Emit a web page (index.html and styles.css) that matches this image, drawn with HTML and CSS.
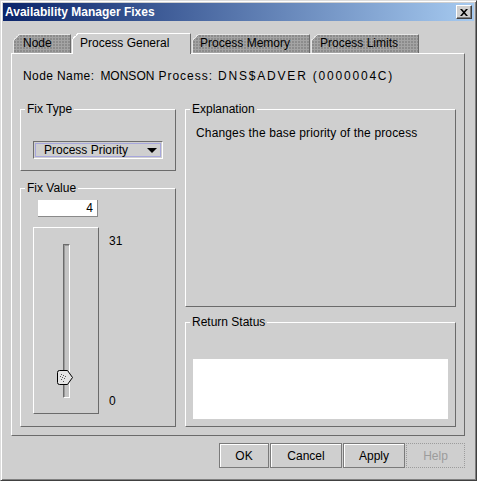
FILE: index.html
```html
<!DOCTYPE html>
<html lang="en">
<head>
  <meta charset="UTF-8">
  <title>Availability Manager Fixes</title>
  <link rel="stylesheet" href="styles.css">
</head>
<body>
  <div class="window">
    <div class="titlebar">
      <span class="title">Availability Manager Fixes</span>
      <button class="close">
        <svg width="8" height="7" viewBox="0 0 8 7"><path d="M0 0h2l2 2.2L6 0h2L5 3.5 8 7H6L4 4.8 2 7H0l3-3.5z" fill="#000"/></svg>
      </button>
    </div>

    <div class="content">
      <div class="tabs">
        <div class="tab tab-node">Node</div>
        <div class="tab tab-general active">Process General</div>
        <div class="tab tab-memory">Process Memory</div>
        <div class="tab tab-limits">Process Limits</div>
      </div>

      <div class="panel">
        <div class="node-info">
          <span class="info-label node-label">Node Name:</span>
          <span class="info-value">MONSON</span>
          <span class="info-label proc-label">Process:</span>
          <span class="info-value proc-value">DNS$ADVER (0000004C)</span>
        </div>

        <div class="groups">
          <div class="col">
            <fieldset class="group fix-type">
              <legend>Fix Type</legend>
              <div class="combo">
                <div class="combo-inner">
                  <span>Process Priority</span>
                  <svg width="10" height="5" viewBox="0 0 10 5"><path d="M0 0h10L5 5z" fill="#000"/></svg>
                </div>
              </div>
            </fieldset>

            <fieldset class="group fix-value">
              <legend>Fix Value</legend>
              <div class="value-field">4</div>
              <div class="slider-row">
                <div class="slider">
                  <div class="track"></div>
                  <svg class="thumb" width="17" height="16" viewBox="0 0 17 16">
                    <path d="M2.5 0.5H10.5L15.5 7.5L10.5 14.5H2.5Q0.5 14.5 0.5 12.5V2.5Q0.5 0.5 2.5 0.5Z" fill="#e4e4e4" stroke="#000"/>
                    <g fill="#555">
                      <rect x="4" y="4" width="1" height="1"/><rect x="6" y="5" width="1" height="1"/>
                      <rect x="5" y="7" width="1" height="1"/><rect x="7" y="8" width="1" height="1"/>
                      <rect x="4" y="9" width="1" height="1"/><rect x="6" y="11" width="1" height="1"/>
                      <rect x="8" y="6" width="1" height="1"/><rect x="3" y="6" width="1" height="1"/>
                    </g>
                  </svg>
                </div>
                <div class="scale">
                  <span>31</span>
                  <span>0</span>
                </div>
              </div>
            </fieldset>
          </div>

          <div class="col">
            <fieldset class="group explanation">
              <legend>Explanation</legend>
              <div class="explain-text">Changes the base priority of the process</div>
            </fieldset>

            <fieldset class="group return-status">
              <legend>Return Status</legend>
              <div class="status-box"></div>
            </fieldset>
          </div>
        </div>
      </div>

      <div class="buttons">
        <button class="btn btn-ok">OK</button>
        <button class="btn btn-cancel">Cancel</button>
        <button class="btn btn-apply">Apply</button>
        <button class="btn btn-help" disabled>Help</button>
      </div>
    </div>
  </div>
</body>
</html>
```

FILE: styles.css
```css
body {
  margin: 0;
  font-family: "Liberation Sans", Arial, sans-serif;
  font-size: 12px;
  color: #000;
  background-color: #cfcfcf;
}

.window {
  width: 477px;
  height: 481px;
  box-sizing: border-box;
  border: 1px solid;
  border-color: #dcdcdc #404040 #404040 #dcdcdc;
  box-shadow: inset 1px 1px #fff, inset -1px -1px #808080;
  padding: 2px;
  background-color: #cfcfcf;
  display: flex;
  flex-direction: column;
}

/* title bar */
.titlebar {
  height: 18px;
  flex: none;
  display: flex;
  align-items: center;
  justify-content: space-between;
  padding: 0 2px;
  background: linear-gradient(to right, #0a246a, #a6caf0);
}

.title {
  color: #fff;
  font-weight: bold;
  line-height: 14px;
}

.close {
  width: 16px;
  height: 14px;
  box-sizing: border-box;
  padding: 0;
  border: 1px solid;
  border-color: #fff #404040 #404040 #fff;
  box-shadow: inset -1px -1px #808080;
  background-color: #cfcfcf;
  display: flex;
  align-items: center;
  justify-content: center;
}

.content {
  padding: 12px 9px 9px 8px;
  display: flex;
  flex-direction: column;
}

/* tabs */
.tabs {
  display: flex;
  align-items: flex-end;
  gap: 1px;
  height: 20px;
  margin-left: 2px;
  position: relative;
  z-index: 1;
}

.tab {
  position: relative;
  box-sizing: border-box;
  height: 19px;
  padding: 1px 0 0 8px;
  line-height: 14px;
  white-space: nowrap;
  border: 1px solid;
  border-bottom: none;
  border-color: #e6e6e6 #6b6b6b transparent #e6e6e6;
  background-color: #a4a4a4;
  background-image: radial-gradient(circle at 1px 1px, #8a8a8a 0.7px, transparent 0.8px);
  background-size: 3px 3px;
}

.tab::before {
  content: "";
  position: absolute;
  top: -1px;
  left: -1px;
  width: 6px;
  height: 6px;
  background: linear-gradient(135deg, #cfcfcf 0 50%, #e6e6e6 50% calc(50% + 1px), transparent calc(50% + 1px));
}

.tab.active {
  height: 21px;
  margin-bottom: -1px;
  padding-top: 2px;
  padding-left: 7px;
  background: #cfcfcf;
  border-color: #fff #6b6b6b transparent #fff;
}

.tab.active::before {
  background: linear-gradient(135deg, #cfcfcf 0 50%, #fff 50% calc(50% + 1px), transparent calc(50% + 1px));
}

.tab-node { width: 58px; padding-left: 9px; }
.tab-general { width: 119px; }
.tab-memory { width: 118px; padding-left: 7px; }
.tab-limits { width: 108px; }

/* panel */
.panel {
  border: 1px solid;
  border-color: #fff #6b6b6b #6b6b6b #fff;
  padding: 0 8px 8px;
}

.node-info {
  margin-top: 15px;
  padding-left: 3px;
  line-height: 14px;
  display: flex;
}

.node-label {
  letter-spacing: 0.4px;
  margin-right: 6px;
}

.proc-label {
  letter-spacing: 1px;
  margin: 0 5px 0 4px;
}

.proc-value {
  letter-spacing: 1.8px;
}

.groups {
  margin-top: 19px;
  display: grid;
  grid-template-columns: 156px 271px;
  column-gap: 9px;
}

.col {
  display: flex;
  flex-direction: column;
}

.group {
  margin: 0;
  padding: 0;
  min-width: 0;
  border: 1px solid;
  border-color: #fff #6b6b6b #6b6b6b #fff;
}

.group legend {
  margin-left: 4px;
  padding: 0 2px;
  line-height: 14px;
}

/* fix type */
.combo {
  margin: 25px 0 11px 12px;
  width: 130px;
  height: 18px;
  box-sizing: border-box;
  border: 1px solid;
  border-color: #6e6e6e #fff #fff #6e6e6e;
  padding: 1px;
}

.combo-inner {
  height: 100%;
  box-sizing: border-box;
  border: 1px solid #a6a6dc;
  display: flex;
  align-items: center;
  justify-content: space-between;
  padding: 0 3px 0 8px;
  line-height: 14px;
}

/* fix value */
.fix-value {
  margin-top: 10px;
}

.value-field {
  margin: 5px 0 0 17px;
  width: 60px;
  height: 17px;
  box-sizing: border-box;
  background-color: #fff;
  border-right: 1px solid #8a8a8a;
  border-bottom: 1px solid #8a8a8a;
  text-align: right;
  padding-right: 4px;
  line-height: 16px;
}

.slider-row {
  display: flex;
  margin: 10px 0 12px 12px;
}

.slider {
  position: relative;
  width: 66px;
  height: 187px;
  box-sizing: border-box;
  border: 1px solid;
  border-color: #fff #6b6b6b #6b6b6b #fff;
  padding-top: 16px;
  display: flex;
  justify-content: center;
}

.track {
  width: 7px;
  height: 154px;
  box-sizing: border-box;
  border: 1px solid;
  border-color: #6b6b6b #fff #fff #6b6b6b;
  box-shadow: inset 1px 1px #9a9a9a;
  background-color: #c4c4c4;
}

.thumb {
  position: absolute;
  left: 23px;
  top: 142px;
}

.scale {
  display: flex;
  flex-direction: column;
  justify-content: space-between;
  margin-left: 10px;
  padding: 7px 0 6px;
  line-height: 14px;
}

/* right column */
.explanation {
  flex: 1;
}

.explain-text {
  padding: 10px;
  line-height: 14px;
  letter-spacing: 0.15px;
}

.return-status {
  margin-top: 8px;
}

.status-box {
  margin: 30px 7px 7px;
  height: 60px;
  background-color: #fff;
}

/* buttons */
.buttons {
  display: flex;
  justify-content: flex-end;
  gap: 1px;
  margin-top: 7px;
}

.btn {
  height: 25px;
  box-sizing: border-box;
  padding: 0;
  font: inherit;
  color: #000;
  background-color: #cfcfcf;
  border: 1px solid #7a7a7a;
  box-shadow: inset 1px 1px #fff;
}

.btn-ok { width: 50px; }
.btn-cancel { width: 72px; }
.btn-apply { width: 62px; }

.btn-help {
  width: 59px;
  color: #9c9c9c;
  border: 1px dotted #9c9c9c;
  box-shadow: none;
}
```
